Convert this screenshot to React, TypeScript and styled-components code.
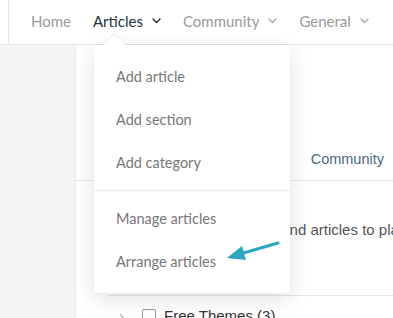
import React from 'react';
import styled, { createGlobalStyle } from 'styled-components';

const GlobalStyle = createGlobalStyle`
  html, body {
    margin: 0;
    padding: 0;
    background: #ffffff;
  }
  body {
    font-family: Lato, "Open Sans", sans-serif;
  }
`;

const Page = styled.div`
  position: relative;
  width: 393px;
  height: 318px;
  overflow: hidden;
  display: flex;
  flex-direction: column;
`;

const NavBar = styled.div`
  height: 44px;
  flex: 0 0 44px;
  border-bottom: 1px solid #e3e3e3;
  padding-left: 8px;
  display: flex;
`;

const NavInner = styled.div`
  flex: 1;
  border-left: 1px solid #e6e6e6;
  display: flex;
  align-items: center;
  padding-left: 22px;
  gap: 22px;
`;

const NavItem = styled.div<{ active?: boolean }>`
  display: flex;
  align-items: center;
  gap: 9px;
  font-size: 15px;
  color: ${p => (p.active ? '#22333d' : '#9a9a9a')};
  padding-bottom: 2px;
  white-space: nowrap;
`;

const Chevron = ({ color }: { color: string }) => (
  <svg width="9" height="6" viewBox="0 0 9 6" fill="none">
    <path d="M1 1l3.5 3.5L8 1" stroke={color} strokeWidth="1.4" strokeLinecap="round" />
  </svg>
);

const Body = styled.div`
  flex: 1;
  display: flex;
  min-height: 0;
`;

const Sidebar = styled.div`
  width: 75px;
  flex: 0 0 75px;
  background: #f5f5f5;
  border-right: 1px solid #e9e9e9;
`;

const Main = styled.div`
  flex: 1;
  min-width: 0;
  overflow: hidden;
  display: flex;
  flex-direction: column;
  font-family: "Liberation Sans", Arial, sans-serif;
`;

const Tabs = styled.div`
  height: 135px;
  flex: 0 0 135px;
  border-bottom: 1px solid #e6e6e6;
  display: flex;
  align-items: flex-end;
  justify-content: flex-end;
  padding-right: 9px;
`;

const Tab = styled.div`
  font-size: 14.5px;
  color: #4a6785;
  padding-bottom: 13px;
  white-space: nowrap;
`;

const Intro = styled.p`
  margin: 0;
  padding: 40px 0 0 46px;
  height: 74px;
  flex: 0 0 74px;
  font-size: 15px;
  color: #555;
  white-space: nowrap;
`;

const ListRow = styled.div`
  margin-left: 32px;
  border-top: 1px solid #e6e6e6;
  display: flex;
  align-items: center;
  padding: 11px 0 0 11px;
  font-size: 15px;
  color: #333;
  white-space: nowrap;
`;

const RowChevron = styled.span`
  color: #aaa;
  font-size: 15px;
  width: 23px;
`;

const Checkbox = styled.span`
  width: 12px;
  height: 12px;
  border: 1px solid #999;
  border-radius: 2px;
  background: #fff;
  margin-right: 8px;
`;

const Dropdown = styled.div`
  position: absolute;
  left: 94px;
  top: 45px;
  width: 196px;
  height: 248px;
  background: #fff;
  border-radius: 4px;
  box-shadow: 0 6px 22px rgba(20, 30, 50, 0.13), 0 0 1px rgba(0, 0, 0, 0.08);
  display: flex;
  flex-direction: column;
  padding-top: 10px;
  box-sizing: border-box;

  &::before {
    content: '';
    position: absolute;
    left: 13px;
    top: -8px;
    width: 15px;
    height: 15px;
    background: #fff;
    transform: rotate(45deg);
    box-shadow: -1px -1px 1px rgba(0, 0, 0, 0.05);
  }
`;

const MenuItem = styled.div`
  position: relative;
  height: 43px;
  display: flex;
  align-items: center;
  padding-left: 22px;
  font-size: 14.5px;
  color: #777;
`;

const Divider = styled.div`
  height: 1px;
  background: #eaeaea;
  margin: 6px 0 6px;
`;

const Annotation = styled.svg`
  position: absolute;
  left: 224px;
  top: 238px;
  overflow: visible;
`;

export default function App() {
  return (
    <Page>
      <GlobalStyle />
      <NavBar>
        <NavInner>
          <NavItem>Home</NavItem>
          <NavItem active>
            Articles <Chevron color="#22333d" />
          </NavItem>
          <NavItem>
            Community <Chevron color="#aaa" />
          </NavItem>
          <NavItem>
            General <Chevron color="#aaa" />
          </NavItem>
        </NavInner>
      </NavBar>
      <Body>
        <Sidebar />
        <Main>
          <Tabs>
            <Tab>Community</Tab>
          </Tabs>
          <Intro>Drag and drop sections and articles to place them</Intro>
          <ListRow>
            <RowChevron>›</RowChevron>
            <Checkbox />
            Free Themes (3)
          </ListRow>
        </Main>
      </Body>
      <Dropdown>
        <MenuItem>Add article</MenuItem>
        <MenuItem>Add section</MenuItem>
        <MenuItem>Add category</MenuItem>
        <Divider />
        <MenuItem>Manage articles</MenuItem>
        <MenuItem>Arrange articles</MenuItem>
      </Dropdown>
      <Annotation width="60" height="30" viewBox="0 0 60 30">
        <path d="M54 5L16 16" stroke="#2ba6bf" strokeWidth="3" strokeLinecap="round" />
        <path d="M3 20L18 8L22 22Z" fill="#2ba6bf" />
      </Annotation>
    </Page>
  );
}
